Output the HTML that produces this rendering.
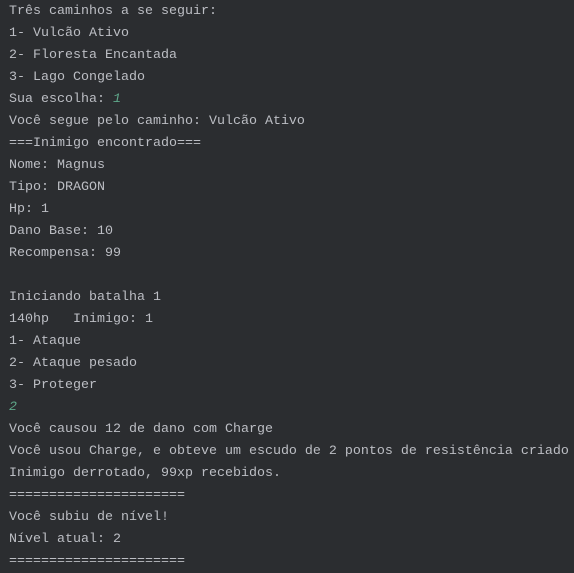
<!DOCTYPE html>
<html><head><meta charset="utf-8"><style>
html,body{margin:0;padding:0;background:#2b2d30;width:574px;height:567px;overflow:hidden}
pre{margin:0;position:absolute;left:9px;top:1px;font-family:"Liberation Mono","DejaVu Sans Mono",monospace;font-size:13.33px;line-height:22px;color:#bcbec4;white-space:pre}
i{color:#5fa88a;font-style:italic}
</style></head><body><pre>Três caminhos a se seguir:
1- Vulcão Ativo
2- Floresta Encantada
3- Lago Congelado
Sua escolha: <i>1</i>
Você segue pelo caminho: Vulcão Ativo
===Inimigo encontrado===
Nome: Magnus
Tipo: DRAGON
Hp: 1
Dano Base: 10
Recompensa: 99

Iniciando batalha 1
140hp   Inimigo: 1
1- Ataque
2- Ataque pesado
3- Proteger
<i>2</i>
Você causou 12 de dano com Charge
Você usou Charge, e obteve um escudo de 2 pontos de resistência criado
Inimigo derrotado, 99xp recebidos.
======================
Você subiu de nível!
Nível atual: 2
======================</pre></body></html>
